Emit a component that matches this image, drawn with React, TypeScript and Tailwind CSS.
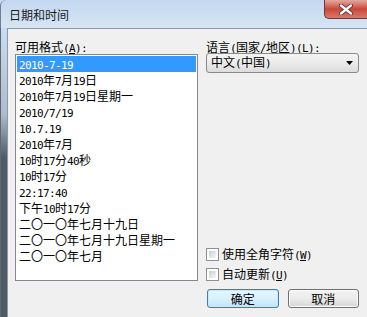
import React from "react";

const items = [
    "2010-7-19",
    "2010年7月19日",
    "2010年7月19日星期一",
    "2010/7/19",
    "10.7.19",
    "2010年7月",
    "10时17分40秒",
    "10时17分",
    "22:17:40",
    "下午10时17分",
    "二〇一〇年七月十九日",
    "二〇一〇年七月十九日星期一",
    "二〇一〇年七月",
];

const monoCls = "font-['DejaVu_Sans_Mono',monospace] text-[11px] tracking-[-0.62px]";

// ASCII runs are set narrower (6px per char) like the bitmap font in the picture
const Txt = ({ s }: { s: string }) => (
    <>
        {s.split(/([\x20-\x7e]+)/).filter(Boolean).map((part, i) =>
            /^[\x20-\x7e]+$/.test(part) ? (
                <span key={i} className={monoCls}>{part}</span>
            ) : (
                <span key={i}>{part}</span>
            )
        )}
    </>
);

const Mono = ({ children }: { children: React.ReactNode }) => (
    <span className={monoCls}>{children}</span>
);

const Checkbox = ({ label, hot }: { label: string; hot: string }) => (
    <div className="flex items-center h-[13px] gap-[3px]">
        <div className="w-[13px] h-[13px] border border-[#8e8f8f] bg-white p-[2px]">
            <div className="w-full h-full bg-gradient-to-br from-[#cbcfd5] to-[#f6f6f6]"></div>
        </div>
        <span className="leading-[13px]">
            {label}
            <Mono>(<span className="underline">{hot}</span>)</Mono>
        </span>
    </div>
);

export default function App() {
    return (
        <div className="w-[367px] h-[317px] overflow-hidden flex flex-col bg-[#c9dbf0] font-['Noto_Sans_CJK_SC',sans-serif] text-[12px] text-black">
            {/* title bar */}
            <div className="relative h-[28px] flex items-center pl-[8px] bg-gradient-to-b from-[#c3d7ef] to-[#d6e5f5] border-l border-[#6d7f94] rounded-tl-[6px]">
                <span className="text-[12px] leading-[14px] text-[#1a1a1a] mt-[2px]">日期和时间</span>
                <div className="absolute top-0 right-0 w-[43px] h-[19px] rounded-bl-[5px] border border-t-0 border-r-0 border-[#6b3a36] bg-gradient-to-b from-[#e3a89e] via-[#c8473a] to-[#d9786c] flex items-center justify-center">
                    <svg width="14" height="11" viewBox="0 0 14 11">
                        <path d="M2 1.5L12 9.5M12 1.5L2 9.5" stroke="#4a2a28" strokeWidth="4" strokeLinecap="round" />
                        <path d="M2 1.5L12 9.5M12 1.5L2 9.5" stroke="#ffffff" strokeWidth="2.4" strokeLinecap="round" />
                    </svg>
                </div>
            </div>

            <div className="flex flex-1">
                {/* left frame */}
                <div className="w-[7px] bg-gradient-to-b from-[#cadcf1] via-[#aebccb] via-[30%] to-[#4f5b65] to-[45%] border-l border-[#5b6a78]"></div>

                {/* client */}
                <div className="flex-1 bg-[#f0f0f0] border-l border-t border-[#8b9aab] flex items-start pl-[7px] pt-[12px] gap-[8px]">
                    <div className="flex flex-col">
                        <div className="leading-[12px] h-[12px]">
                            可用格式<Mono>(<span className="underline">A</span>):</Mono>
                        </div>
                        <div className="mt-[1px] w-[183px] h-[227px] border border-[#828790] bg-white p-[1px]">
                            {items.map((it, i) => (
                                <div
                                    key={i}
                                    className={i === 0
                                        ? "h-[16px] leading-[16px] pl-[2px] bg-[#3399ff] text-white"
                                        : "h-[16px] leading-[16px] pl-[2px]"}
                                >
                                    <Txt s={it} />
                                </div>
                            ))}
                        </div>
                    </div>

                    <div className="flex flex-col w-[153px]">
                        <div className="leading-[12px] h-[12px]">
                            语言<Mono>(</Mono>国家<Mono>/</Mono>地区<Mono>)(<span className="underline">L</span>):</Mono>
                        </div>
                        <div className="h-[20px] border border-[#8a8a8a] rounded-[3px] bg-gradient-to-b from-[#f3f3f3] via-[#ebebeb] to-[#dcdcdc] flex items-center pl-[4px] pr-[5px] justify-between">
                            <span className="leading-[14px]">中文<Mono>(</Mono>中国<Mono>)</Mono></span>
                            <svg width="7" height="4" viewBox="0 0 7 4">
                                <path d="M0 0H7L3.5 4Z" fill="#000" />
                            </svg>
                        </div>

                        <div className="mt-[175px] flex flex-col gap-[7px]">
                            <Checkbox label="使用全角字符" hot="W" />
                            <Checkbox label="自动更新" hot="U" />
                        </div>

                        <div className="mt-[8px] ml-[1px] flex gap-[9px]">
                            <button className="w-[73px] h-[19px] rounded-[3px] border border-[#3c7fb1] bg-gradient-to-b from-[#eaf6fd] via-[#d9f0fc] to-[#bee6fd] leading-[17px] shadow-[inset_0_0_0_1px_#c6e7fb]">
                                确定
                            </button>
                            <button className="w-[73px] h-[19px] rounded-[3px] border border-[#707070] bg-gradient-to-b from-[#f2f2f2] via-[#ebebeb] to-[#d5d5d5] leading-[17px] shadow-[inset_0_0_0_1px_#fbfbfb]">
                                取消
                            </button>
                        </div>
                    </div>
                </div>
            </div>
        </div>
    );
}
